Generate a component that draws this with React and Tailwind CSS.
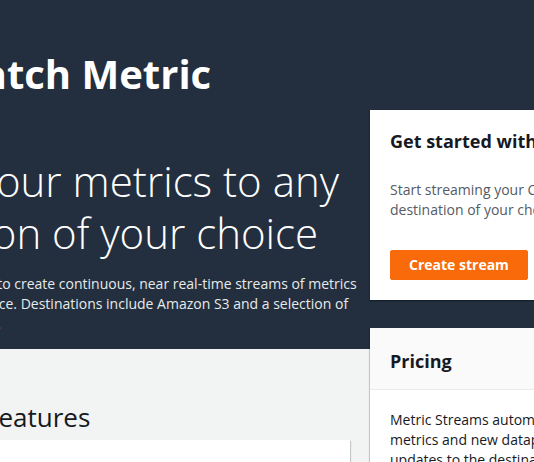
export default function App() {
  const cardShadow =
    "shadow-[0_1px_1px_0_rgba(0,28,36,0.3),1px_1px_1px_0_rgba(0,28,36,0.15),-1px_1px_1px_0_rgba(0,28,36,0.15)]";
  return (
    <div className="w-[534px] h-[462px] overflow-hidden bg-[#f2f3f3] font-['Open_Sans',sans-serif] text-[#16191f]">
      <div className="h-[349px] bg-[#232f3e] flex gap-[20px] -ml-[170px]">
        <div className="w-[520px] shrink-0 pt-[49px] text-white">
          <h1 className="text-[40px] leading-[50px] font-bold whitespace-nowrap">
            CloudWatch Metric
            <br />
            Streams
          </h1>
          <p className="mt-[6px] text-[42px] leading-[52px] font-light whitespace-nowrap">
            Stream your metrics to any
            <br />
            destination of your choice
          </p>
          <p className="mt-[15px] text-[14px] leading-[20px] text-[#e6ebeb] whitespace-nowrap">
            Use CloudWatch streams to create continuous, near real-time streams of metrics
            <br />
            to a data lake of your choice. Destinations include Amazon S3 and a selection of
            <br />
            third-party analysis suites.
          </p>
        </div>
        <div className="w-[330px] shrink-0 pt-[110px]">
          <div className={`relative bg-white ${cardShadow} p-[20px]`}>
            <h2 className="text-[18px] leading-[22px] font-bold whitespace-nowrap">
              Get started with Metric Streams
            </h2>
            <p className="mt-[28px] text-[14px] leading-[20px] text-[#545b64] whitespace-nowrap">
              Start streaming your CloudWatch metrics to a
              <br />
              destination of your choice.
            </p>
            <button className="mt-[30px] h-[30px] px-[18px] bg-[#f96a0b] border border-[#f96a0b] rounded-[2px] text-white text-[14px] font-bold leading-[20px]">
              Create stream
            </button>
          </div>
          <div className={`relative mt-[28px] bg-white ${cardShadow}`}>
            <div className="px-[20px] pt-[22px] pb-[17px] bg-[#fafafa] border-b border-[#eaeded]">
              <h2 className="text-[18px] leading-[22px] font-bold">Pricing</h2>
            </div>
            <p className="px-[20px] pt-[20px] pb-[20px] text-[14px] leading-[20px] whitespace-nowrap">
              Metric Streams automatically scales to handle
              <br />
              metrics and new datapoints, and sends regular
              <br />
              updates to the destination of your choice.
            </p>
          </div>
        </div>
      </div>
      <div className="-ml-[15px] w-[365px] pt-[52px]">
        <h2 className="text-[26px] leading-[32px] font-normal">Features</h2>
        <div className={`relative mt-[7px] h-[200px] bg-white ${cardShadow}`}></div>
      </div>
    </div>
  );
}
